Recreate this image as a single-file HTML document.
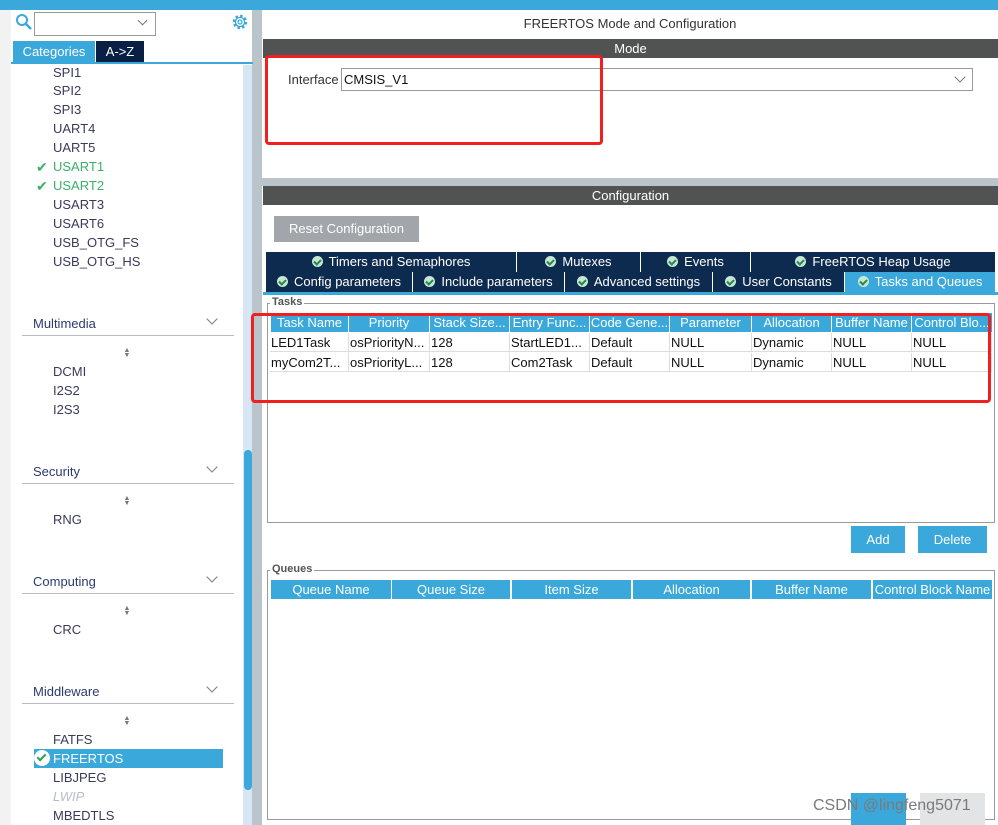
<!DOCTYPE html>
<html><head><meta charset="utf-8"><style>
*{margin:0;padding:0;box-sizing:border-box}
body{width:998px;height:825px;position:relative;overflow:hidden;background:#fff;font-family:"Liberation Sans",Arial,sans-serif;font-size:13px;color:#222}
.a{position:absolute}
.it{position:absolute;left:53px;color:#3a3a5a;font-size:13px;line-height:16px;margin-top:1px}
.hd{position:absolute;left:33px;color:#2b3a70;font-size:13px}
.ul{position:absolute;left:22px;width:212px;height:1px;background:#b8bcc0}
.chev{position:absolute;left:208px;width:8px;height:8px;border-right:1px solid #777;border-bottom:1px solid #777;transform:rotate(45deg)}
.arr{position:absolute;left:123px;width:8px;font-size:7px;line-height:5px;color:#777;text-align:center}
.bar{position:absolute;left:263px;width:735px;height:19px;background:#515352;color:#fff;text-align:center;line-height:19px;font-size:13px}
.tab{position:absolute;height:20px;background:#0d2a4f;color:#fff;text-align:center;line-height:20px;font-size:13px;white-space:nowrap}
.ck{display:inline-block;width:11px;height:11px;border-radius:50%;background:#c8e6d4;vertical-align:-1px;margin-right:6px;position:relative}
.ck:after{content:"";position:absolute;left:3px;top:2px;width:3px;height:5px;border-right:2px solid #1f8a4c;border-bottom:2px solid #1f8a4c;transform:rotate(45deg)}
.th{position:absolute;height:19px;background:#3aa8da;color:#fff;line-height:19px;font-size:13px;text-align:center;overflow:hidden;white-space:nowrap}
.td{position:absolute;height:19px;line-height:19px;font-size:13px;color:#111;padding-left:1px;border-right:1px solid #ddd;border-bottom:1px solid #ddd;white-space:nowrap;overflow:hidden}
.fs{position:absolute;border:1px solid #9a9a9a}
.lg{position:absolute;background:#fff;font-size:11px;font-weight:bold;color:#555;padding:0 2px}
.btn{position:absolute;background:#3aa8da;color:#fff;text-align:center;font-size:13px}
</style></head><body>
<div class="a" style="left:0;top:0;width:998px;height:10px;background:#3aa8da"></div>
<div class="a" style="left:0;top:10px;width:11px;height:815px;background:#f2f2f2"></div>
<div class="a" style="left:252px;top:10px;width:10px;height:815px;background:#bac5cb"></div>
<svg class="a" style="left:15px;top:13px" width="18" height="18"><circle cx="7" cy="7" r="5" stroke="#3aa8da" stroke-width="2" fill="none"/><line x1="11" y1="11" x2="16" y2="16" stroke="#3aa8da" stroke-width="2.5"/></svg>
<div class="a" style="left:34px;top:12px;width:122px;height:24px;border:1px solid #999;background:#fff"></div>
<div class="a" style="left:139px;top:17px;width:7px;height:7px;border-right:1px solid #777;border-bottom:1px solid #777;transform:rotate(45deg)"></div>
<svg class="a" style="left:231px;top:13px" width="18" height="18" viewBox="0 0 18 18"><circle cx="9" cy="9" r="6" stroke="#3aa8da" stroke-width="2.4" fill="none" stroke-dasharray="2.5 2.2"/><circle cx="9" cy="9" r="4.6" stroke="#3aa8da" stroke-width="1.3" fill="none"/><circle cx="9" cy="9" r="2" stroke="#3aa8da" stroke-width="1.3" fill="none"/></svg>
<div class="a" style="left:13px;top:41px;width:82px;height:21px;background:#3aa8da;color:#fff;text-align:center;line-height:21px;font-size:13px">Categories</div>
<div class="a" style="left:96px;top:41px;width:48px;height:21px;background:#0a1f44;color:#fff;text-align:center;line-height:21px;font-size:13px">A-&gt;Z</div>
<div class="a" style="left:11px;top:62px;width:242px;height:2px;background:#3aa8da"></div>
<div class="a" style="left:243px;top:65px;width:9px;height:760px;background:#d6e6f4"></div>
<div class="a" style="left:244px;top:450px;width:8px;height:340px;background:#3aa8da;border-radius:4px"></div>
<div class="it" style="top:64px">SPI1</div>
<div class="it" style="top:82px">SPI2</div>
<div class="it" style="top:101px">SPI3</div>
<div class="it" style="top:120px">UART4</div>
<div class="it" style="top:139px">UART5</div>
<div class="it" style="top:158px;color:#3cae6a">USART1</div>
<div class="a" style="left:36px;top:159px;color:#3cae6a;font-size:14px">✔</div>
<div class="it" style="top:177px;color:#3cae6a">USART2</div>
<div class="a" style="left:36px;top:178px;color:#3cae6a;font-size:14px">✔</div>
<div class="it" style="top:196px">USART3</div>
<div class="it" style="top:215px">USART6</div>
<div class="it" style="top:234px">USB_OTG_FS</div>
<div class="it" style="top:253px">USB_OTG_HS</div>

<div class="hd" style="top:316px">Multimedia</div><div class="chev" style="top:315px"></div><div class="ul" style="top:335px"></div>
<div class="arr" style="top:348px">▲<br>▼</div>
<div class="it" style="top:363px">DCMI</div><div class="it" style="top:382px">I2S2</div><div class="it" style="top:401px">I2S3</div>
<div class="hd" style="top:464px">Security</div><div class="chev" style="top:463px"></div><div class="ul" style="top:483px"></div>
<div class="arr" style="top:496px">▲<br>▼</div>
<div class="it" style="top:511px">RNG</div>
<div class="hd" style="top:574px">Computing</div><div class="chev" style="top:573px"></div><div class="ul" style="top:593px"></div>
<div class="arr" style="top:606px">▲<br>▼</div>
<div class="it" style="top:621px">CRC</div>
<div class="hd" style="top:684px">Middleware</div><div class="chev" style="top:683px"></div><div class="ul" style="top:703px"></div>
<div class="arr" style="top:716px">▲<br>▼</div>
<div class="it" style="top:731px">FATFS</div>
<div class="a" style="left:34px;top:749px;width:189px;height:19px;background:#3aa8da"></div>
<div class="a" style="left:34px;top:750px;width:16px;height:16px;border-radius:50%;background:#fff"></div>
<div class="a" style="left:39px;top:752px;width:5px;height:9px;border-right:2.5px solid #2e9e58;border-bottom:2.5px solid #2e9e58;transform:rotate(45deg)"></div>
<div class="it" style="top:750px;color:#fff">FREERTOS</div>
<div class="it" style="top:769px">LIBJPEG</div>
<div class="it" style="top:788px;color:#b8bcc4;font-style:italic">LWIP</div>
<div class="it" style="top:807px">MBEDTLS</div>

<div class="a" style="left:262px;top:16px;width:736px;text-align:center;font-size:13px;color:#333">FREERTOS Mode and Configuration</div>
<div class="bar" style="top:39px">Mode</div>
<div class="a" style="left:288px;top:72px;font-size:13px;color:#333">Interface</div>
<div class="a" style="left:341px;top:68px;width:632px;height:23px;border:1px solid #999;padding-left:2px;line-height:21px;font-size:13px;color:#111">CMSIS_V1</div>
<div class="a" style="left:956px;top:73px;width:8px;height:8px;border-right:1px solid #777;border-bottom:1px solid #777;transform:rotate(45deg)"></div>
<div class="a" style="left:262px;top:178px;width:736px;height:8px;background:#bac5cb"></div>
<div class="bar" style="top:186px">Configuration</div>
<div class="a" style="left:274px;top:216px;width:145px;height:26px;background:#a2a6aa;color:#fff;text-align:center;line-height:26px;font-size:13px">Reset Configuration</div>
<div class="tab" style="left:266px;top:252px;width:250px"><span class="ck"></span>Timers and Semaphores</div>
<div class="tab" style="left:517px;top:252px;width:123px"><span class="ck"></span>Mutexes</div>
<div class="tab" style="left:641px;top:252px;width:109px"><span class="ck"></span>Events</div>
<div class="tab" style="left:751px;top:252px;width:244px"><span class="ck"></span>FreeRTOS Heap Usage</div>
<div class="tab" style="left:266px;top:272px;width:146px"><span class="ck"></span>Config parameters</div>
<div class="tab" style="left:413px;top:272px;width:151px"><span class="ck"></span>Include parameters</div>
<div class="tab" style="left:565px;top:272px;width:147px"><span class="ck"></span>Advanced settings</div>
<div class="tab" style="left:713px;top:272px;width:131px"><span class="ck"></span>User Constants</div>
<div class="tab" style="left:845px;top:272px;width:150px;background:#3aa8da"><span class="ck"></span>Tasks and Queues</div>
<div class="a" style="left:263px;top:292px;width:735px;height:3px;background:#3aa8da"></div>

<div class="fs" style="left:267px;top:303px;width:728px;height:220px"></div>
<div class="lg" style="left:270px;top:296px">Tasks</div>
<div class="th" style="left:271px;top:313px;width:77px">Task Name</div>
<div class="th" style="left:349px;top:313px;width:80px">Priority</div>
<div class="th" style="left:430px;top:313px;width:79px">Stack Size...</div>
<div class="th" style="left:510px;top:313px;width:79px">Entry Func...</div>
<div class="th" style="left:590px;top:313px;width:79px">Code Gene...</div>
<div class="th" style="left:670px;top:313px;width:81px">Parameter</div>
<div class="th" style="left:752px;top:313px;width:79px">Allocation</div>
<div class="th" style="left:832px;top:313px;width:79px">Buffer Name</div>
<div class="th" style="left:912px;top:313px;width:80px">Control Blo...</div>
<div class="td" style="left:270px;top:333px;width:79px">LED1Task</div>
<div class="td" style="left:349px;top:333px;width:81px">osPriorityN...</div>
<div class="td" style="left:430px;top:333px;width:80px">128</div>
<div class="td" style="left:510px;top:333px;width:80px">StartLED1...</div>
<div class="td" style="left:590px;top:333px;width:80px">Default</div>
<div class="td" style="left:670px;top:333px;width:82px">NULL</div>
<div class="td" style="left:752px;top:333px;width:80px">Dynamic</div>
<div class="td" style="left:832px;top:333px;width:80px">NULL</div>
<div class="td" style="left:912px;top:333px;width:80px">NULL</div>
<div class="td" style="left:270px;top:353px;width:79px">myCom2T...</div>
<div class="td" style="left:349px;top:353px;width:81px">osPriorityL...</div>
<div class="td" style="left:430px;top:353px;width:80px">128</div>
<div class="td" style="left:510px;top:353px;width:80px">Com2Task</div>
<div class="td" style="left:590px;top:353px;width:80px">Default</div>
<div class="td" style="left:670px;top:353px;width:82px">NULL</div>
<div class="td" style="left:752px;top:353px;width:80px">Dynamic</div>
<div class="td" style="left:832px;top:353px;width:80px">NULL</div>
<div class="td" style="left:912px;top:353px;width:80px">NULL</div>

<div class="btn" style="left:851px;top:526px;width:54px;height:27px;line-height:27px">Add</div>
<div class="btn" style="left:918px;top:526px;width:69px;height:27px;line-height:27px">Delete</div>

<div class="fs" style="left:267px;top:570px;width:728px;height:250px"></div>
<div class="lg" style="left:270px;top:563px">Queues</div>
<div class="th" style="left:271px;top:580px;width:120px">Queue Name</div>
<div class="th" style="left:392px;top:580px;width:118px">Queue Size</div>
<div class="th" style="left:512px;top:580px;width:119px">Item Size</div>
<div class="th" style="left:633px;top:580px;width:117px">Allocation</div>
<div class="th" style="left:752px;top:580px;width:119px">Buffer Name</div>
<div class="th" style="left:873px;top:580px;width:119px">Control Block Name</div>

<div class="btn" style="left:851px;top:793px;width:55px;height:32px"></div>
<div class="a" style="left:920px;top:793px;width:65px;height:32px;background:#e2e4e6"></div>
<div class="a" style="left:813px;top:797px;font-size:16px;color:#7a7a7a">CSDN @lingfeng5071</div>

<div class="a" style="left:265px;top:55px;width:338px;height:90px;border:3px solid #f02020;border-radius:4px"></div>
<div class="a" style="left:251px;top:313px;width:740px;height:90px;border:3px solid #f02020;border-radius:4px"></div>
</body></html>
